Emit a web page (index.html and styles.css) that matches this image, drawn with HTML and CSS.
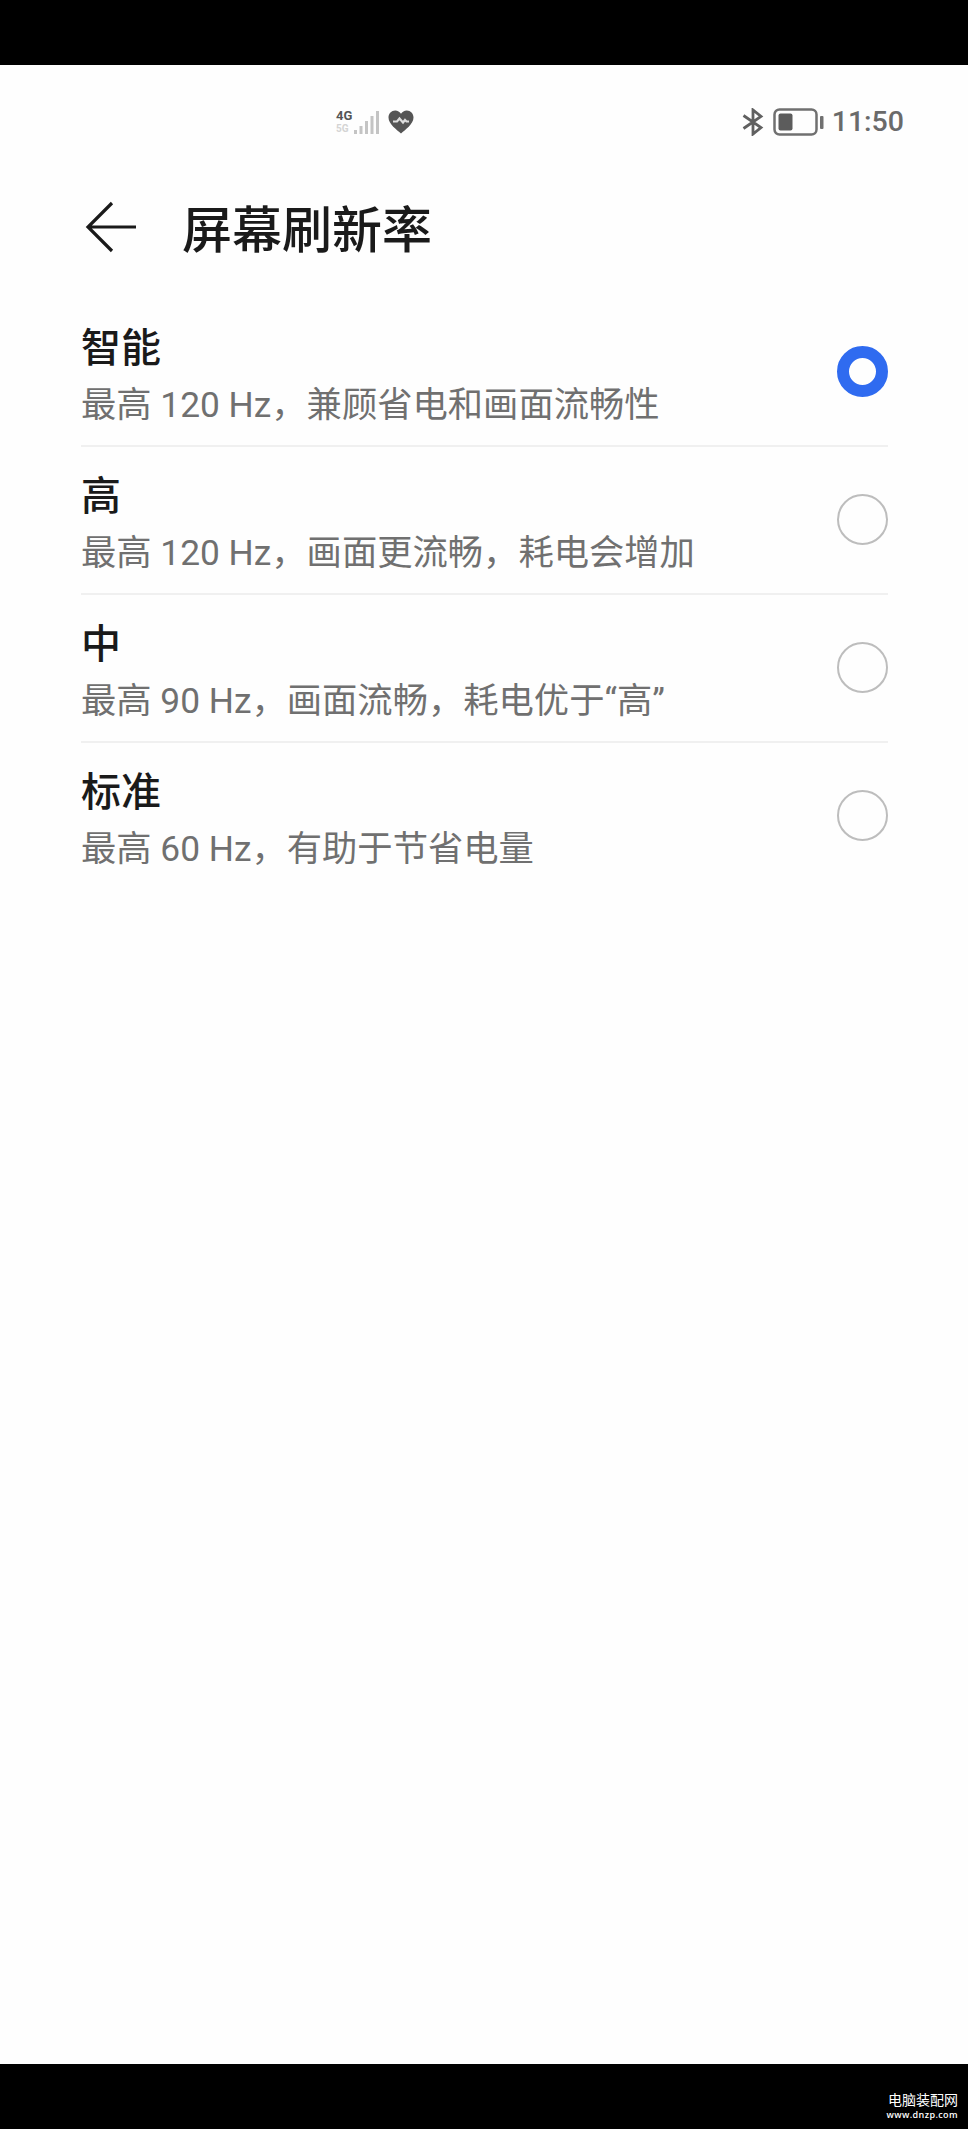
FILE: index.html
```html
<!DOCTYPE html>
<html lang="zh-CN">
<head>
    <meta charset="UTF-8">
    <meta name="viewport" content="width=device-width, initial-scale=1.0">
    <title>屏幕刷新率</title>
    <link rel="stylesheet" href="styles.css">
</head>
<body>
    <main class="screen">
        <div class="status-bar">
            <div class="status-left">
                <div class="network">
                    <span class="network-type">4G</span>
                    <span class="network-sub">5G</span>
                </div>
                <svg class="signal" width="26" height="26" viewBox="0 0 26 26">
                    <path d="M1.500 21v4M7 17v8M12.500 12v13M18 7v18M23.500 2v23" stroke="#c4c4c4" stroke-width="3"/>
                </svg>
                <svg class="heart" width="26" height="24" viewBox="0 0 26 24">
                    <path d="M13 23.5C9 20 .5 14 .5 7.5.5 3.500 3.500.5 7.200.5c2.500 0 4.600 1.300 5.800 3.200C14.200 1.800 16.300.5 18.800.5c3.700 0 6.700 3 6.700 7C25.500 14 17 20 13 23.500z" fill="#555"/>
                    <path d="M5 11.500h4l2.500-3 3.500 4 2-2.500 1.500 1.500H21" fill="none" stroke="#ddd" stroke-width="2.200"/>
                </svg>
            </div>
            <div class="status-right">
                <svg class="bluetooth" width="22" height="28" viewBox="0 0 22 28">
                    <path d="M1.500 7.500L19 19.500 11 26V2l8 6.500L1.500 20.500" fill="none" stroke="#606060" stroke-width="2.800"/>
                </svg>
                <svg class="battery" width="51" height="28" viewBox="0 0 51 28">
                    <rect x="1.500" y="1.500" width="42" height="25" rx="5" fill="none" stroke="#707070" stroke-width="2.500"/>
                    <rect x="5.500" y="5.500" width="14" height="17" rx="2" fill="#5c5c5c"/>
                    <rect x="47" y="8" width="3.500" height="13" rx="1" fill="#707070"/>
                </svg>
                <span class="time">11:50</span>
            </div>
        </div>

        <header class="header">
            <svg class="back" width="52" height="52" viewBox="0 0 52 52">
                <path d="M27 2L3 26l24 24M3 26h48" fill="none" stroke="#1a1a1a" stroke-width="3.200"/>
            </svg>
            <h1>屏幕刷新率</h1>
        </header>

        <ul class="options">
            <li class="option">
                <div class="option-text">
                    <h2>智能</h2>
                    <p>最高 120 Hz，兼顾省电和画面流畅性</p>
                </div>
                <span class="radio checked"></span>
            </li>
            <li class="option">
                <div class="option-text">
                    <h2>高</h2>
                    <p>最高 120 Hz，画面更流畅，耗电会增加</p>
                </div>
                <span class="radio"></span>
            </li>
            <li class="option">
                <div class="option-text">
                    <h2>中</h2>
                    <p>最高 90 Hz，画面流畅，耗电优于“高”</p>
                </div>
                <span class="radio"></span>
            </li>
            <li class="option">
                <div class="option-text">
                    <h2>标准</h2>
                    <p>最高 60 Hz，有助于节省电量</p>
                </div>
                <span class="radio"></span>
            </li>
        </ul>
    </main>

    <footer class="site-mark">
        <span class="site-name">电脑装配网</span>
        <span class="site-url">www.dnzp.com</span>
    </footer>
</body>
</html>
```
FILE: styles.css
```css
* {
    box-sizing: border-box;
}
body {
    margin: 0;
    padding-top: 65px;
    height: 2129px;
    display: flex;
    flex-direction: column;
    background-color: #000;
    font-family: Roboto, "Noto Sans CJK SC", sans-serif;
    overflow: hidden;
}
.screen {
    height: 1999px;
    background-color: #fefefe;
}
/* Status bar */
.status-bar {
    height: 113px;
    padding: 0 64px 0 336px;
    display: flex;
    align-items: center;
    justify-content: space-between;
}
.status-left,
.status-right {
    display: flex;
    align-items: center;
}
.network {
    width: 18px;
    display: flex;
    flex-direction: column;
    font-weight: bold;
    line-height: 13px;
}
.network-type {
    font-size: 13px;
    color: #555;
}
.network-sub {
    font-size: 10px;
    color: #d4d4d4;
}
.signal {
    margin-right: 8px;
}
.bluetooth {
    margin-right: 9px;
}
.battery {
    margin-right: 8px;
}
.time {
    font-size: 28.5px;
    font-weight: 500;
    line-height: 34px;
    color: #6a6a6a;
}
/* Page title */
.header {
    height: 98px;
    padding-left: 85px;
    display: flex;
    align-items: center;
    gap: 45px;
}
h1 {
    margin: 0;
    padding-top: 7px;
    font-size: 50px;
    font-weight: 500;
    line-height: 60px;
    color: #1a1a1a;
}
/* Options */
.options {
    list-style: none;
    margin: 23px 80px 0 81px;
    padding: 0;
}
.option {
    height: 148px;
    display: flex;
    align-items: center;
    justify-content: space-between;
    border-bottom: 2px solid #f0f0f0;
}
.option:last-child {
    border-bottom-color: transparent;
}
.option-text {
    padding-top: 9px;
}
h2 {
    margin: 0;
    font-size: 40px;
    font-weight: 500;
    line-height: 56px;
    color: #1a1a1a;
}
.option p {
    margin: 0;
    font-size: 35.3px;
    line-height: 56px;
    color: #707070;
}
.radio {
    width: 51px;
    height: 51px;
    margin-bottom: 2px;
    border: 2.5px solid #bdbdbd;
    border-radius: 50%;
}
.radio.checked {
    border: 12.5px solid #2f6bf0;
}
/* Site name in the bottom bar */
.site-mark {
    height: 65px;
    padding: 27px 10px 0 0;
    display: flex;
    flex-direction: column;
    align-items: flex-end;
    color: #fff;
}
.site-name {
    font-size: 14px;
    line-height: 18px;
}
.site-url {
    font-family: "Open Sans", sans-serif;
    font-size: 9px;
    font-weight: 600;
    letter-spacing: 0.4px;
    line-height: 12px;
}
```
